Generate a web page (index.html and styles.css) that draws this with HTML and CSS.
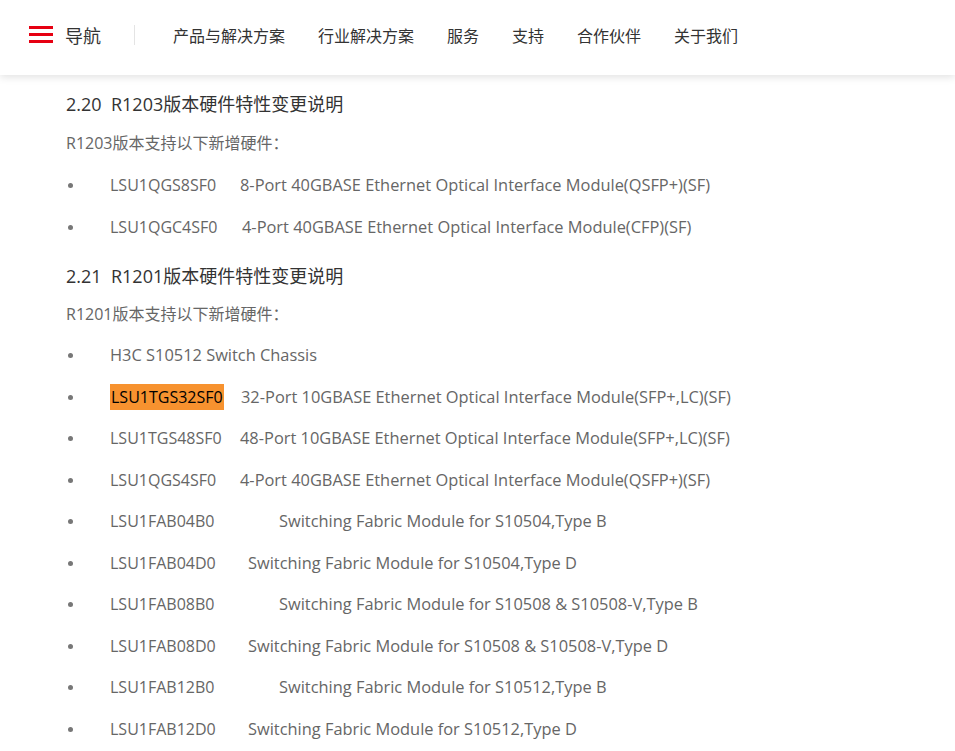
FILE: index.html
```html
<!DOCTYPE html>
<html lang="zh-CN">
<head>
    <meta charset="UTF-8">
    <meta name="viewport" content="width=device-width, initial-scale=1.0">
    <title>R1203 / R1201 硬件特性变更说明</title>
    <link rel="stylesheet" href="styles.css">
</head>
<body>
    <header class="top-bar">
        <div class="nav-toggle">
            <span class="burger"><i></i><i></i><i></i></span>
            <span class="nav-title">导航</span>
        </div>
        <nav class="main-nav">
            <a href="#">产品与解决方案</a>
            <a href="#">行业解决方案</a>
            <a href="#">服务</a>
            <a href="#">支持</a>
            <a href="#">合作伙伴</a>
            <a href="#">关于我们</a>
        </nav>
    </header>

    <main class="doc">
        <h2 class="sec-title">2.20&nbsp; R1203版本硬件特性变更说明</h2>
        <p class="sec-intro">R1203版本支持以下新增硬件：</p>
        <ul class="hw-list">
            <li><span class="code w130">LSU1QGS8SF0</span><span>8-Port 40GBASE Ethernet Optical Interface Module(QSFP+)(SF)</span></li>
            <li><span class="code w132">LSU1QGC4SF0</span><span>4-Port 40GBASE Ethernet Optical Interface Module(CFP)(SF)</span></li>
        </ul>

        <h2 class="sec-title">2.21&nbsp; R1201版本硬件特性变更说明</h2>
        <p class="sec-intro">R1201版本支持以下新增硬件：</p>
        <ul class="hw-list">
            <li><span>H3C S10512 Switch Chassis</span></li>
            <li><span class="code w131"><mark class="hit">LSU1TGS32SF0</mark></span><span>32-Port 10GBASE Ethernet Optical Interface Module(SFP+,LC)(SF)</span></li>
            <li><span class="code w130">LSU1TGS48SF0</span><span>48-Port 10GBASE Ethernet Optical Interface Module(SFP+,LC)(SF)</span></li>
            <li><span class="code w130">LSU1QGS4SF0</span><span>4-Port 40GBASE Ethernet Optical Interface Module(QSFP+)(SF)</span></li>
            <li><span class="code w169">LSU1FAB04B0</span><span>Switching Fabric Module for S10504,Type B</span></li>
            <li><span class="code w138">LSU1FAB04D0</span><span>Switching Fabric Module for S10504,Type D</span></li>
            <li><span class="code w169">LSU1FAB08B0</span><span>Switching Fabric Module for S10508 &amp; S10508-V,Type B</span></li>
            <li><span class="code w138">LSU1FAB08D0</span><span>Switching Fabric Module for S10508 &amp; S10508-V,Type D</span></li>
            <li><span class="code w169">LSU1FAB12B0</span><span>Switching Fabric Module for S10512,Type B</span></li>
            <li><span class="code w138">LSU1FAB12D0</span><span>Switching Fabric Module for S10512,Type D</span></li>
        </ul>
    </main>
</body>
</html>
```

FILE: styles.css
```css
* {
    box-sizing: border-box;
}

body {
    margin: 0;
    background: #fff;
    font-family: "Segoe UI", "Open Sans", "Noto Sans CJK SC", sans-serif;
    color: #666;
    overflow: hidden;
}

/* barra di navigazione in alto */
.top-bar {
    height: 75px;
    padding-bottom: 6px;
    display: flex;
    align-items: center;
    background: #fff;
    box-shadow: 0 2px 8px rgba(0, 0, 0, 0.12);
    position: relative;
    z-index: 2;
}

.nav-toggle {
    display: flex;
    align-items: center;
    padding-left: 29px;
    padding-right: 33px;
    border-right: 1px solid #e4e4e4;
    height: 20px;
}

.burger {
    display: flex;
    flex-direction: column;
    justify-content: space-between;
    width: 24px;
    height: 17px;
}

.burger i {
    display: block;
    height: 3px;
    background: #e60012;
}

.nav-title {
    margin-left: 12px;
    font-size: 18px;
    color: #333;
    font-family: "Noto Sans CJK SC", sans-serif;
}

.main-nav {
    display: flex;
    padding-left: 38px;
}

.main-nav a {
    font-family: "Noto Sans CJK SC", sans-serif;
    font-size: 16px;
    color: #333;
    text-decoration: none;
    margin-right: 33px;
}

/* contenuto */
.doc {
    padding: 16px 0 0 66px;
}

.sec-title {
    margin: 0;
    font-size: 18px;
    font-weight: normal;
    color: #333;
    line-height: 26px;
}

.sec-title + .sec-intro {
    margin-top: 14px;
}

.sec-intro {
    margin: 0;
    font-size: 16px;
    line-height: 24px;
}

.hw-list {
    list-style: none;
    margin: 9px 0 0 0;
    padding: 0;
}

.hw-list + .sec-title {
    margin-top: 16px;
}

.hw-list + .sec-title + .sec-intro {
    margin-top: 13px;
}

.hw-list + .sec-title + .sec-intro + .hw-list {
    margin-top: 8px;
}

.hw-list li {
    position: relative;
    padding-left: 44px;
    font-size: 16.4px;
    line-height: 41.5px;
    height: 41.5px;
    white-space: nowrap;
}

.hw-list li::before {
    content: "";
    position: absolute;
    left: 2px;
    top: 19px;
    width: 5px;
    height: 5px;
    border-radius: 50%;
    background: #777;
}

.code {
    display: inline-block;
    font-size: 16px;
    line-height: 24px;
}

.w130 { width: 130px; }
.w131 { width: 131px; }
.w132 { width: 132px; }
.w138 { width: 138px; }
.w169 { width: 169px; }

.hit {
    background: #f7922f;
    color: #000;
    padding: 2px 1px;
}
```
